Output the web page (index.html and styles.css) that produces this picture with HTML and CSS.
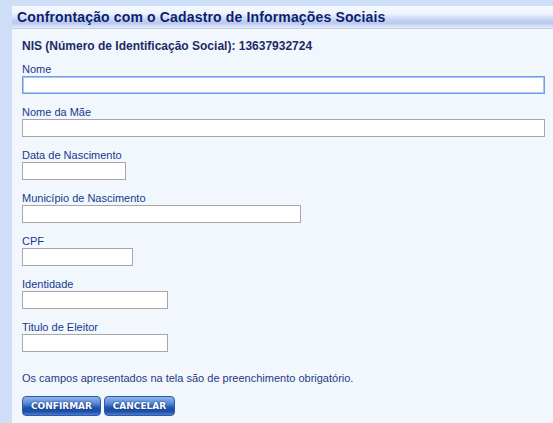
FILE: index.html
```html
<!DOCTYPE html>
<html lang="pt-BR">
<head>
    <meta charset="UTF-8">
    <title>Confrontação com o Cadastro de Informações Sociais</title>
    <link rel="stylesheet" href="styles.css">
</head>
<body>
    <div class="painel">
        <h1 class="titulo">Confrontação com o Cadastro de Informações Sociais</h1>
        <div class="conteudo">
            <p class="nis">NIS (Número de Identificação Social): 13637932724</p>

            <div class="campo">
                <label for="nome">Nome</label>
                <input type="text" id="nome" class="grande foco" autofocus>
            </div>
            <div class="campo">
                <label for="mae">Nome da Mãe</label>
                <input type="text" id="mae" class="grande">
            </div>
            <div class="campo">
                <label for="nasc">Data de Nascimento</label>
                <input type="text" id="nasc" class="data">
            </div>
            <div class="campo">
                <label for="mun">Município de Nascimento</label>
                <input type="text" id="mun" class="municipio">
            </div>
            <div class="campo">
                <label for="cpf">CPF</label>
                <input type="text" id="cpf" class="cpf">
            </div>
            <div class="campo">
                <label for="ident">Identidade</label>
                <input type="text" id="ident" class="medio">
            </div>
            <div class="campo">
                <label for="titulo">Titulo de Eleitor</label>
                <input type="text" id="titulo" class="medio">
            </div>

            <p class="aviso">Os campos apresentados na tela são de preenchimento obrigatório.</p>

            <div class="botoes">
                <button class="botao confirmar">CONFIRMAR</button>
                <button class="botao cancelar">CANCELAR</button>
            </div>
        </div>
    </div>
</body>
</html>
```

FILE: styles.css
```css
body {
    margin: 0;
    background-color: #cfdef7;
    font-family: "Liberation Sans", Arial, sans-serif;
    height: 423px;
    overflow: hidden;
}
.painel {
    margin: 6px 0 0 12px;
    background-color: #f2f7fe;
    height: 417px;
}
.titulo {
    margin: 0;
    height: 22px;
    line-height: 22px;
    padding-left: 5px;
    font-size: 14px;
    font-weight: bold;
    letter-spacing: 0.15px;
    color: #0c1f70;
    border-bottom: 1px solid #c6cfdc;
    background: linear-gradient(to bottom, #f6f9ff 0%, #eef3fd 35%, #c3d1f2 65%, #b9c9ee 78%, #e6edfb 100%);
}
.conteudo {
    padding: 0 8px 0 10px;
}
.nis {
    margin: 0;
    padding-top: 10px;
    height: 26px;
    font-size: 12px;
    font-weight: bold;
    color: #1b2b66;
}
.campo {
    height: 43px;
}
.campo label {
    display: block;
    height: 11px;
    line-height: 9px;
    font-size: 11px;
    color: #173a8c;
}
.campo input {
    display: block;
    box-sizing: border-box;
    height: 18px;
    margin: 0;
    padding: 0 2px;
    background-color: #fff;
    border: 1px solid #a7a7a7;
    font-size: 11px;
    caret-color: #000;
}
.campo input.foco {
    border-color: #6f9fe6;
    box-shadow: inset 0 0 0 1px #a9c7f3;
    outline: none;
}
.grande { width: 523px; }
.data { width: 104px; }
.municipio { width: 279px; }
.cpf { width: 111px; }
.medio { width: 146px; }
.aviso {
    margin: 0;
    padding-top: 6px;
    height: 24px;
    font-size: 11px;
    color: #1f3b7e;
}
.botoes {
    display: flex;
    gap: 3px;
}
.botao {
    height: 20px;
    padding: 0;
    border: 1px solid #2a5aa8;
    border-radius: 4px;
    font-family: "DejaVu Sans", Verdana, sans-serif;
    font-size: 9px;
    font-weight: bold;
    color: #fff;
    text-shadow: 0 0 2px #0c2a66;
    cursor: pointer;
    background: linear-gradient(to bottom, #8fb5ec 0%, #5a8ad8 35%, #1f52b0 60%, #1d4ea6 80%, #4a7cd0 100%);
}
.confirmar { width: 79px; }
.cancelar { width: 71px; }
```
